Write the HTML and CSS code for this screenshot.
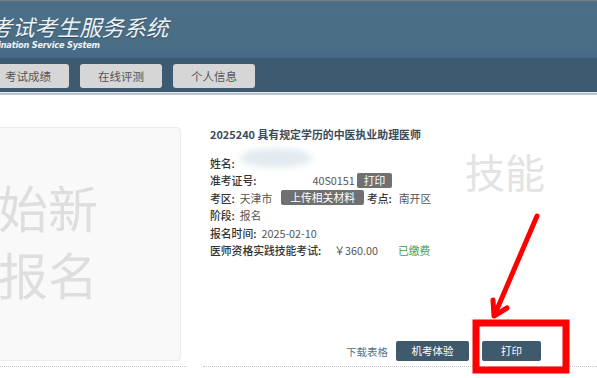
FILE: index.html
```html
<!DOCTYPE html>
<html lang="zh-CN">
  <head>
    <meta charset="utf-8">
    <title>考生服务系统</title>
<link rel="stylesheet" href="styles.css">
  </head>
  <body>
    <div class="page">
      <div class="head">
        <div class="logo">
          <div class="logo-cn">考试考生服务系统</div>
          <div class="logo-en">Examination Service System</div>
        </div>
      </div>
      <div class="nav">
        <a class="tab">考试成绩</a>
        <a class="tab">在线评测</a>
        <a class="tab">个人信息</a>
      </div>
      <div class="nav-line"></div>

      <div class="main">
        <div class="col-left">
          <div class="new-card">
            <div class="new-l1">开始新</div>
            <div class="new-l2">报名</div>
          </div>
        </div>

        <div class="col-right">
          <div class="mark">技能</div>
          <div class="exam-title">2025240 具有规定学历的中医执业助理医师</div>
          <div class="info">
            <div class="row"><span class="lbl">姓名:</span><span class="smudge"></span></div>
            <div class="row"><span class="lbl">准考证号:</span><span class="val id">40S0151</span><span class="tag">打印</span></div>
            <div class="row"><span class="lbl">考区:</span><span class="val">天津市</span><span class="tag tag-up">上传相关材料</span><span class="lbl">考点:</span><span class="val site">南开区</span></div>
            <div class="row"><span class="lbl">阶段:</span><span class="val">报名</span></div>
            <div class="row"><span class="lbl">报名时间:</span><span class="val">2025-02-10</span></div>
            <div class="row"><span class="lbl">医师资格实践技能考试:</span><span class="val fee">￥360.00</span><span class="paid">已缴费</span></div>
          </div>
          <div class="actions">
            <a class="link">下载表格</a>
            <a class="btn">机考体验</a>
            <a class="btn btn-print">打印</a>
          </div>
        </div>
      </div>

      <svg class="annot" width="597" height="378" viewBox="0 0 597 378">
        <path d="M537 216 L495 314" stroke="#ff0000" stroke-width="5" stroke-linecap="round" fill="none"/>
        <path d="M493 300 L494 316 L507 308" stroke="#ff0000" stroke-width="5" stroke-linecap="round" stroke-linejoin="round" fill="none"/>
        <rect x="476" y="323" width="90" height="47" stroke="#ff0000" stroke-width="7" fill="none"/>
      </svg>
    </div>
  </body>
</html>
```

FILE: styles.css
```css
body { margin: 0; background: #fff; font-family: "Noto Sans CJK SC", "Liberation Sans", sans-serif; }
.page { position: relative; width: 597px; height: 378px; overflow: hidden; }

.head { height: 56px; border-top: 1px solid #7c7f82; background: linear-gradient(#4b6f87, #4a6d86 85%, #46698a); }
.logo { margin-left: -10px; padding-top: 11px; color: #eef3f6; }
.logo-cn { font-size: 22.3px; line-height: 28px; font-style: italic; text-shadow: 0 1px 1px #2f4a5e; }
.logo-en { margin-left: -16px; font-family: "DejaVu Sans", sans-serif; font-size: 8.2px; font-weight: bold; font-style: italic; line-height: 10px; letter-spacing: -0.2px; }

.nav { display: flex; gap: 11px; height: 35px; padding: 6px 0 0 0; box-sizing: border-box; margin-left: -13px; background: #3d5a70; border-top: 1px solid #456680; }
.tab { width: 82px; height: 24px; line-height: 24px; text-align: center; font-size: 11.5px; color: #555; background: #d6d6d6; border-radius: 3px; }
.nav-line { height: 2px; background: #b9c2c9; border-top: 1px solid #e1e6ea; }

.main { display: flex; }
.col-left { margin-left: -20px; width: 201px; padding: 32px 6px 5px 0; border-bottom: 1px dotted #c8c8c8; }
.new-card { height: 234px; box-sizing: border-box; padding-top: 45px; background: #f9f9f9; border: 1px solid #ebebeb; border-radius: 4px; color: #dedede; font-size: 50px; line-height: 67px; }
.new-l1 { margin-left: -33px; }
.new-l2 { margin-left: 17px; }

.col-right { position: relative; flex: 1; margin-left: 16px; padding: 0 0 5px 7px; display: flex; flex-direction: column; border-bottom: 1px dotted #c8c8c8; }
.mark { position: absolute; left: 262px; top: 53px; font-size: 40px; line-height: 46px; color: #e3e3e3; letter-spacing: 0; }
.exam-title { margin-top: 32px; font-size: 10.9px; font-weight: bold; color: #3b4c59; line-height: 14px; }
.info { margin-top: 13px; font-size: 10.8px; color: #555; }
.row { position: relative; display: flex; align-items: center; height: 17.5px; }
.lbl { color: #333; font-weight: 500; }
.val { margin-left: 5px; }
.id { margin-left: 56px; }
.smudge { position: absolute; left: 30px; top: -6px; width: 72px; height: 20px; border-radius: 50%; background: #e3ebf0; filter: blur(3px); }
.tag { margin-left: 2px; padding: 0 7px; height: 15px; line-height: 15px; font-size: 10.8px; color: #fff; background: #707070; border-radius: 2px; }
.tag-up { margin: 0 3px 0 9px; padding: 0 9px; }
.site { margin-left: 7px; }
.fee { margin-left: 13px; }
.paid { margin-left: 20px; color: #4c9c4c; }

.actions { margin-top: auto; display: flex; align-items: center; justify-content: flex-end; padding-right: 56px; font-size: 10.5px; }
.link { color: #5a7386; margin-right: 8px; }
.btn { width: 73px; height: 20px; line-height: 20px; text-align: center; color: #fff; background: #3f596d; border-radius: 2px; }
.btn-print { width: 59px; margin-left: 13px; }

.annot { position: absolute; left: 0; top: 0; }
```
